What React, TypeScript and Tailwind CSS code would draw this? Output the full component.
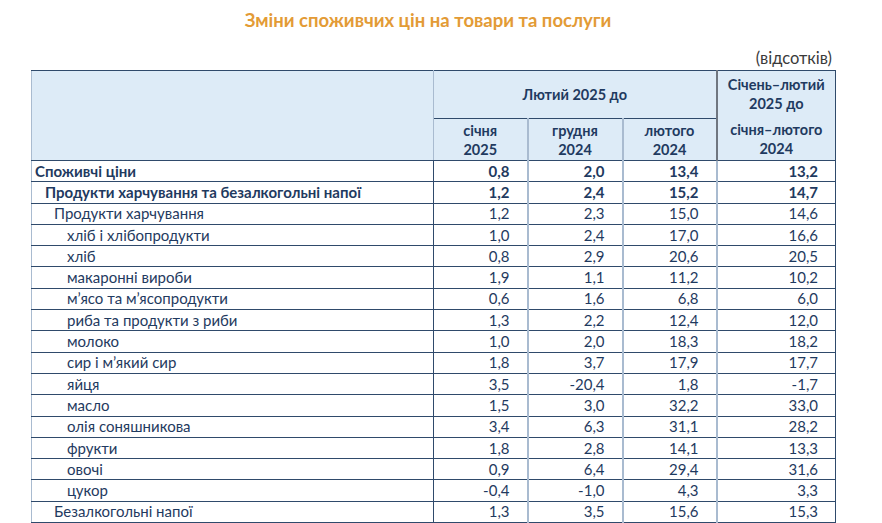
const rows = [
  { label: "Споживчі ціни", v: ["0,8", "2,0", "13,4", "13,2"], bold: true, pad: "pl-[3px]" },
  { label: "Продукти харчування та безалкогольні напої", v: ["1,2", "2,4", "15,2", "14,7"], bold: true, pad: "pl-[13px]" },
  { label: "Продукти харчування", v: ["1,2", "2,3", "15,0", "14,6"], pad: "pl-[22px]" },
  { label: "хліб і хлібопродукти", v: ["1,0", "2,4", "17,0", "16,6"], pad: "pl-[35px]" },
  { label: "хліб", v: ["0,8", "2,9", "20,6", "20,5"], pad: "pl-[35px]" },
  { label: "макаронні вироби", v: ["1,9", "1,1", "11,2", "10,2"], pad: "pl-[35px]" },
  { label: "м’ясо та м’ясопродукти", v: ["0,6", "1,6", "6,8", "6,0"], pad: "pl-[35px]" },
  { label: "риба та продукти з риби", v: ["1,3", "2,2", "12,4", "12,0"], pad: "pl-[35px]" },
  { label: "молоко", v: ["1,0", "2,0", "18,3", "18,2"], pad: "pl-[35px]" },
  { label: "сир і м’який сир", v: ["1,8", "3,7", "17,9", "17,7"], pad: "pl-[35px]" },
  { label: "яйця", v: ["3,5", "-20,4", "1,8", "-1,7"], pad: "pl-[35px]" },
  { label: "масло", v: ["1,5", "3,0", "32,2", "33,0"], pad: "pl-[35px]" },
  { label: "олія соняшникова", v: ["3,4", "6,3", "31,1", "28,2"], pad: "pl-[35px]" },
  { label: "фрукти", v: ["1,8", "2,8", "14,1", "13,3"], pad: "pl-[35px]" },
  { label: "овочі", v: ["0,9", "6,4", "29,4", "31,6"], pad: "pl-[35px]" },
  { label: "цукор", v: ["-0,4", "-1,0", "4,3", "3,3"], pad: "pl-[35px]" },
  { label: "Безалкогольні напої", v: ["1,3", "3,5", "15,6", "15,3"], pad: "pl-[22px]" },
]

const colBorder = [
  "border-r-2 border-r-[#a9bbd0]",
  "border-r-2 border-r-[#a9bbd0]",
  "border-r-2 border-r-[#a9bbd0]",
  "border-r border-r-[#2f4a6b]",
]

export default function App() {
  return (
    <div className="w-[882px] h-[523px] overflow-hidden bg-white font-['Lato',_'Liberation_Sans',_sans-serif] text-[#1f3a60]">
      <div className="ml-[31px] w-[804px]">
        <h1 className="pt-[8px] pr-[10px] text-center text-[18.5px] leading-[24px] font-bold text-[#e39b36]">
          Зміни споживчих цін на товари та послуги
        </h1>
        <div className="mt-[16px] pr-[3px] text-right text-[16.5px] leading-[21px] text-[#3a3a3a]">(відсотків)</div>
        <table className="mt-[1px] w-full table-fixed border-collapse text-[15px] leading-[19px]">
          <colgroup>
            <col className="w-[402px]" />
            <col className="w-[94px]" />
            <col className="w-[95px]" />
            <col className="w-[94px]" />
            <col className="w-[119px]" />
          </colgroup>
          <thead className="bg-[#ddebf7] text-[14.5px] font-bold">
            <tr className="h-[48px]">
              <th rowSpan={2} className="border-t border-t-[#2f4a6b] border-l border-l-[#a9bbd0] border-r border-r-[#a9bbd0] border-b border-b-[#2f4a6b]"></th>
              <th colSpan={3} className="border-t border-t-[#2f4a6b] border-b border-b-[#2f4a6b] border-r-2 border-r-[#6f7680] font-bold">
                Лютий 2025 до
              </th>
              <th className="border-t border-t-[#2f4a6b] border-r border-r-[#2f4a6b] pb-[2px] font-bold">
                Січень–лютий
                <br />
                2025 до
              </th>
            </tr>
            <tr className="h-[42px]">
              <th className="border-b border-b-[#2f4a6b] border-r-2 border-r-[#a9bbd0] font-bold">
                січня
                <br />
                2025
              </th>
              <th className="border-b border-b-[#2f4a6b] border-r-2 border-r-[#a9bbd0] font-bold">
                грудня
                <br />
                2024
              </th>
              <th className="border-b border-b-[#2f4a6b] border-r-2 border-r-[#6f7680] font-bold">
                лютого
                <br />
                2024
              </th>
              <th className="border-b border-b-[#2f4a6b] border-r border-r-[#2f4a6b] font-bold">
                січня–лютого
                <br />
                2024
              </th>
            </tr>
          </thead>
          <tbody>
            {rows.map((r) => (
              <tr key={r.label} className={`h-[21.3px] ${r.bold ? "font-bold" : ""}`}>
                <td className={`border-b border-b-[#2f4a6b] border-l border-l-[#a9bbd0] border-r border-r-[#2f4a6b] p-0 ${r.pad} whitespace-nowrap`}>
                  {r.label}
                </td>
                {r.v.map((val, i) => (
                  <td key={i} className={`border-b border-b-[#2f4a6b] p-0 pr-[17px] text-right ${colBorder[i]}`}>
                    {val}
                  </td>
                ))}
              </tr>
            ))}
            <tr className="h-[21px]">
              <td className="border-l border-l-[#a9bbd0] border-r border-r-[#2f4a6b]"></td>
              <td className={colBorder[0]}></td>
              <td className={colBorder[1]}></td>
              <td className={colBorder[2]}></td>
              <td className={colBorder[3]}></td>
            </tr>
          </tbody>
        </table>
      </div>
    </div>
  )
}
